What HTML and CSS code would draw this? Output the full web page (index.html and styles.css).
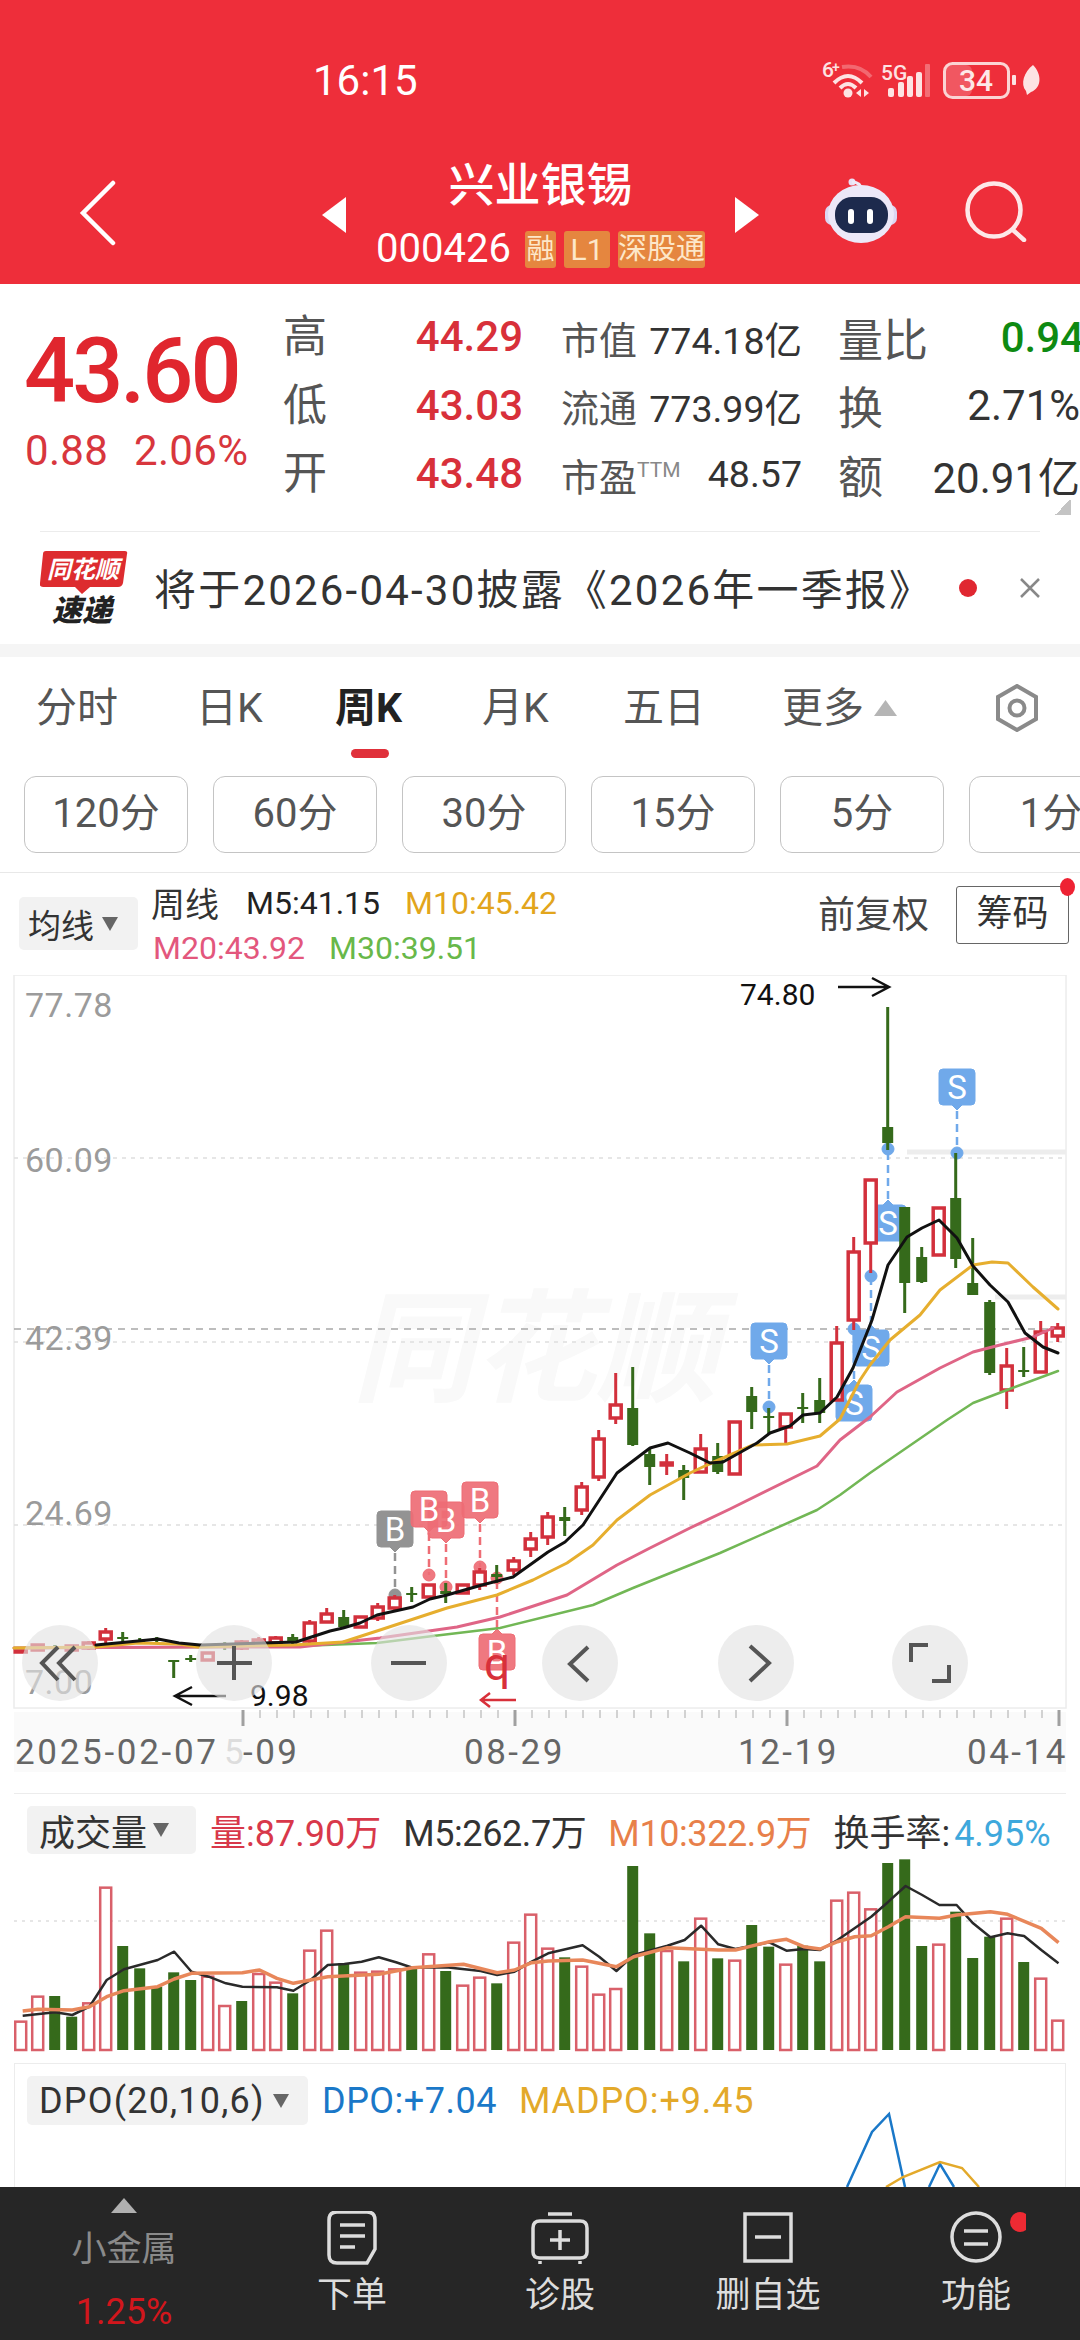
FILE: index.html
```html
<!DOCTYPE html>
<html lang="zh">
<head>
<meta charset="utf-8">
<title>兴业银锡</title>
<link rel="stylesheet" href="styles.css">
</head>
<body>
<div class="page">
  <header class="header">
    <div class="status">
      <span class="time">16:15</span>
      <svg class="status-icons" viewBox="820 55 225 52" width="225" height="52">
        <text class="st-small" x="822" y="77">6</text><text class="st-tiny" x="832" y="72">+</text>
        <path class="st-fade" d="M842 67 Q860 64 871 77"/>
        <path class="st-line" d="M834 83 Q848 69 862 83"/>
        <path class="st-line" d="M840 88 Q848 80 856 88"/>
        <circle class="st-fill" cx="848" cy="93" r="4.5"/>
        <path class="st-fill" d="M861 89v8l-5-4zM864 89v8l5-4z"/>
        <text class="st-small" x="881" y="80">5G</text>
        <rect class="st-fill" x="888" y="88" width="6" height="9" rx="2"/>
        <rect class="st-fill" x="898" y="82" width="6" height="15" rx="2"/>
        <rect class="st-fill" x="907" y="76" width="6" height="21" rx="2"/>
        <rect class="st-fill" x="916" y="72" width="6" height="25" rx="2"/>
        <rect class="st-faint" x="925" y="64" width="5" height="33" rx="1"/>
        <rect class="st-batfill" x="946" y="65" width="26" height="31" rx="6"/>
        <rect class="st-bat" x="944.500" y="63.500" width="64" height="34" rx="8"/>
        <text class="st-num" x="976" y="91">34</text>
        <rect class="st-fill" x="1012" y="75" width="4" height="10" rx="1"/>
        <path class="st-fill" d="M1033 65 C1042 74 1042 88 1031 92 L1027 95 L1026 91 C1020 84 1024 72 1033 65Z"/>
      </svg>
    </div>
    <div class="nav">
      <svg class="back" viewBox="0 0 42 66" width="42" height="66"><path d="M35 3 L5 33 L35 63"/></svg>
      <svg class="tri" viewBox="0 0 24 36" width="24" height="36"><path d="M24 0V36L0 18Z"/></svg>
      <div class="stock">
        <div class="stock-name">兴业银锡</div>
        <div class="stock-code">
          <span class="code">000426</span>
          <span class="tag tag-a">融</span>
          <span class="tag tag-b">L1</span>
          <span class="tag tag-c">深股通</span>
        </div>
      </div>
      <svg class="tri" viewBox="0 0 24 36" width="24" height="36"><path d="M0 0V36L24 18Z"/></svg>
      <div class="nav-right">
        <svg class="robot" viewBox="825 177 72 65" width="72" height="65">
          <circle class="rb-ant" cx="852" cy="181" r="3.500"/>
          <path class="rb-stem" d="M852 181 Q861 181 862 190"/>
          <rect class="rb-ear" x="825" y="204" width="72" height="20" rx="7"/>
          <ellipse class="rb-head" cx="861" cy="213" rx="33" ry="29"/>
          <rect class="rb-visor" x="835" y="196" width="53" height="36" rx="17"/>
          <rect class="rb-eye" x="848" y="208" width="6" height="15" rx="3"/>
          <rect class="rb-eye" x="867" y="208" width="6" height="15" rx="3"/>
        </svg>
        <svg class="search" viewBox="965 181 62 62" width="62" height="62">
          <circle cx="994" cy="211" r="26.500"/>
          <path d="M1013 231 L1024 241"/>
        </svg>
      </div>
    </div>
  </header>

  <section class="quote">
    <div class="price-box">
      <div class="price">43.60</div>
      <div class="change"><span>0.88</span><span>2.06%</span></div>
    </div>
    <div class="q-grid">
      <div class="q-row">
        <span class="q-label">高</span><span class="q-val">44.29</span>
        <div class="q-metric"><span class="m-label">市值</span><span class="m-val">774.18亿</span></div>
        <div class="q-side"><span class="s-label">量比</span><span class="s-val s-green">0.94</span></div>
      </div>
      <div class="q-row">
        <span class="q-label">低</span><span class="q-val">43.03</span>
        <div class="q-metric"><span class="m-label">流通</span><span class="m-val">773.99亿</span></div>
        <div class="q-side"><span class="s-label">换</span><span class="s-val">2.71%</span></div>
      </div>
      <div class="q-row">
        <span class="q-label">开</span><span class="q-val">43.48</span>
        <div class="q-metric"><span class="m-label">市盈<sup class="ttm">TTM</sup></span><span class="m-val">48.57</span></div>
        <div class="q-side"><span class="s-label">额</span><span class="s-val">20.91亿</span></div>
      </div>
    </div>
    <span class="corner"></span>
  </section>

  <section class="notice">
    <svg class="logo" viewBox="40 543 90 90" width="90" height="90">
      <path class="lg-red" d="M46 551 H125 Q128 551 127 554 L123 583 Q122 587 118 587 H90 L82 594 L75 587 H43 Q39 587 40 583 L43 554 Q43 551 46 551Z"/>
      <text class="lg-top" x="83" y="578">同花顺</text>
      <text class="lg-bot" x="82" y="621">速递</text>
    </svg>
    <span class="notice-text">将于2026-04-30披露《2026年一季报》</span>
    <span class="notice-dot"></span>
    <svg class="notice-x" viewBox="0 0 24 24" width="24" height="24"><path d="M3 3 L21 21 M21 3 L3 21"/></svg>
  </section>

  <div class="band"></div>

  <nav class="tabs">
    <span class="tab">分时</span>
    <span class="tab">日K</span>
    <span class="tab tab-on">周K</span>
    <span class="tab">月K</span>
    <span class="tab">五日</span>
    <span class="tab tab-more">更多<svg viewBox="0 0 23 16" width="23" height="16"><path d="M11.500 0L23 16H0Z"/></svg></span>
    <svg class="hex" viewBox="0 0 48 48" width="48" height="48"><path d="M24 2 L43 13 V35 L24 46 L5 35 V13Z"/><circle cx="24" cy="24" r="7.500"/></svg>
  </nav>

  <div class="chips">
    <span class="chip">120分</span>
    <span class="chip">60分</span>
    <span class="chip">30分</span>
    <span class="chip">15分</span>
    <span class="chip">5分</span>
    <span class="chip">1分</span>
  </div>

  <div class="legend">
    <div class="select sel-ma">均线<i class="caret"></i></div>
    <div class="ma-lines">
      <div class="ma-row"><span class="ma-title">周线</span><span class="c-black">M5:41.15</span><span class="c-gold">M10:45.42</span></div>
      <div class="ma-row ma-row2"><span class="c-pink">M20:43.92</span><span class="c-green">M30:39.51</span></div>
    </div>
    <span class="adjust">前复权</span>
    <span class="chouma">筹码<i class="chouma-dot"></i></span>
  </div>

  <svg id="kline" class="kline" viewBox="0 975 1080 818" width="1080" height="818"></svg>

  <section class="panel panel-vol">
    <div class="panel-head">
      <div class="select sel-vol">成交量<i class="caret"></i></div>
      <span class="c-red">量:87.90万</span>
      <span class="c-dark tight">M5:262.7万</span>
      <span class="c-orange tight">M10:322.9万</span>
      <span class="turnover"><span class="c-dark">换手率:</span><span class="c-sky">4.95%</span></span>
    </div>
    <svg id="vol" class="vol" viewBox="14 1854 1052 209" width="1052" height="209"></svg>
  </section>

  <section class="panel panel-dpo">
    <div class="panel-head">
      <div class="select sel-dpo"><span class="dpo-name">DPO(20,10,6)</span><i class="caret"></i></div>
      <span class="c-blue">DPO:+7.04</span>
      <span class="c-gold2">MADPO:+9.45</span>
    </div>
    <svg class="dpo" viewBox="14 2095 1052 92" width="1052" height="92">
      <polyline class="dpo-blue" points="846,2187 871,2132 888,2114 904,2187"/>
      <polyline class="dpo-blue" points="928,2187 939,2164 953,2187"/>
      <polyline class="dpo-gold" points="885,2187 902,2177 939,2162 961,2168 978,2187"/>
    </svg>
  </section>

  <footer class="bottom">
    <div class="b-item b-first">
      <svg class="b-tri" viewBox="0 0 26 15" width="26" height="15"><path d="M13 0L26 15H0Z"/></svg>
      <span class="b-sector">小金属</span>
      <span class="b-pct">1.25%</span>
    </div>
    <div class="b-item">
      <svg class="b-icon" viewBox="-50 0 100 54" width="100" height="54"><path d="M-15 1 H15 Q23 1 23 9 V38 L15 52 H-15 Q-23 52 -23 44 V9 Q-23 1 -15 1Z"/><path d="M-12 14 H13 M-12 25 H13 M-12 36 H3"/></svg>
      <span class="b-label">下单</span>
    </div>
    <div class="b-item">
      <svg class="b-icon" viewBox="-50 0 100 54" width="100" height="54"><path d="M-12 3 H12"/><path d="M-20 10 H20 Q27 10 27 17 V41 Q27 47 20 47 H-20 Q-27 47 -27 41 V17 Q-27 10 -20 10Z"/><path d="M-20 50 V53 M20 50 V53 M-10 29 H10 M0 19 V39"/></svg>
      <span class="b-label">诊股</span>
    </div>
    <div class="b-item">
      <svg class="b-icon" viewBox="-50 0 100 54" width="100" height="54"><path d="M-23 3 H23 V50 H-23Z"/><path d="M-13 26 H13"/></svg>
      <span class="b-label">删自选</span>
    </div>
    <div class="b-item">
      <svg class="b-icon" viewBox="-50 0 100 54" width="100" height="54"><circle cx="0" cy="26" r="24"/><path d="M-12 20 H12 M-12 33 H12"/><ellipse class="b-dot" cx="44" cy="11" rx="10" ry="10"/></svg>
      <span class="b-label">功能</span>
    </div>
  </footer>
</div>
<script src="chart.js"></script>
</body>
</html>
```
FILE: styles.css
```css
* { box-sizing: border-box; }
html, body { margin: 0; padding: 0; background: #fff; }
body { width: 1080px; height: 2340px; overflow: hidden; font-family: Roboto, "Noto Sans CJK SC", sans-serif; color: #333; }
.page { width: 1080px; height: 2340px; overflow: hidden; display: flex; flex-direction: column; }
svg { display: block; flex: none; }
i { font-style: normal; }

/* header */
.header { height: 284px; flex: none; background: #ee2e3a; color: #fff; padding-top: 55px; }
.status { height: 52px; display: flex; align-items: center; justify-content: space-between; padding: 0 35px 0 313px; }
.time { font-size: 42px; line-height: 52px; color: #fff; }
.st-small { font: 500 21px Roboto, sans-serif; fill: #fde3e3; }
.st-tiny { font: 500 14px Roboto, sans-serif; fill: #fde3e3; }
.st-line { fill: none; stroke: #fde3e3; stroke-width: 4; }
.st-fade { fill: none; stroke: #fff; stroke-opacity: .28; stroke-width: 4; }
.st-fill { fill: #fde3e3; }
.st-faint { fill: #fff; fill-opacity: .3; }
.st-bat { fill: none; stroke: #fbd4d4; stroke-width: 3; }
.st-batfill { fill: #fff; fill-opacity: .2; }
.st-num { font: 500 30px Roboto, sans-serif; fill: #fde8e8; text-anchor: middle; }

.nav { margin-top: 51px; height: 110px; display: flex; align-items: center; padding-left: 78px; }
.back { margin-right: 202px; }
.back path { fill: none; stroke: #fff; stroke-width: 4.500; stroke-linecap: round; }
.tri { margin-top: 4px; }
.tri path { fill: #fff; }
.stock { width: 389px; display: flex; flex-direction: column; align-items: center; }
.stock-name { font-size: 46px; line-height: 54px; color: #fff; font-weight: 500; }
.stock-code { margin-top: 18px; height: 38px; display: flex; align-items: center; }
.code { font-size: 40px; line-height: 38px; width: 149px; color: #fff; }
.tag { height: 37px; line-height: 37px; background: #e5863f; color: #fde7c9; font-size: 30px; text-align: center; border-radius: 3px; }
.tag-a { width: 31px; margin-right: 8px; font-size: 28px; overflow: hidden; }
.tag-b { width: 46px; margin-right: 8px; }
.tag-c { width: 87px; font-size: 29px; white-space: nowrap; overflow: hidden; }
.nav-right { display: flex; align-items: center; padding-left: 66px; }
.robot { margin-right: 68px; margin-top: -6px; }
.rb-ant { fill: #e8e0f5; }
.rb-stem { fill: none; stroke: #efe9f8; stroke-width: 3; }
.rb-ear { fill: #dcd6f2; }
.rb-head { fill: #ece8f8; }
.rb-visor { fill: #1d2a4d; }
.rb-eye { fill: #fff; }
.search { margin-top: -4px; }
.search circle, .search path { fill: none; stroke: #fde8e8; stroke-width: 4.500; stroke-linecap: round; }

/* quote */
.quote { height: 247px; flex: none; position: relative; display: flex; padding: 19px 0 0 25px; }
.price-box { width: 258px; padding-top: 24px; }
.price { font-size: 90px; line-height: 90px; color: #e0262e; font-weight: 500; letter-spacing: -3px; margin-left: -1px; }
.change { margin-top: 12px; display: flex; gap: 26px; font-size: 42px; line-height: 44px; color: #d8363d; letter-spacing: .3px; white-space: nowrap; }
.q-grid { flex: 1; display: flex; flex-direction: column; }
.q-row { height: 68.500px; display: grid; grid-template-columns: 60px 179px 240px 240px; column-gap: 0; align-items: center; }
.q-label { font-size: 44px; line-height: 50px; color: #555; }
.q-val { font-size: 42px; line-height: 50px; color: #d8303a; font-weight: 500; text-align: right; margin-right: -1px; }
.q-metric { margin-left: 39px; width: 241px; display: flex; justify-content: space-between; align-items: center; }
.m-label { font-size: 38px; color: #555; white-space: nowrap; }
.ttm { font-size: 21px; color: #888; vertical-align: 14px; line-height: 0; }
.m-val { font-size: 37.500px; color: #333; }
.q-side { margin-left: 76px; width: 242px; display: flex; justify-content: space-between; align-items: center; }
.s-label { font-size: 45px; color: #555; }
.s-val { font-size: 42px; color: #333; white-space: nowrap; }
.s-green { color: #0e8a12; font-weight: 500; margin-right: -4px; }
.corner { position: absolute; left: 1054px; top: 216px; width: 17px; height: 15px; background: linear-gradient(135deg, transparent 50%, #c4c4c4 50%); }

/* notice */
.notice { height: 113px; flex: none; margin: 0 40px; border-top: 1px solid #ececec; display: flex; align-items: center; position: relative; }
.logo { margin-right: 24px; }
.lg-red { fill: #dd2c2f; }
.lg-top { font: italic 700 24px "Noto Sans CJK SC", sans-serif; fill: #fff; text-anchor: middle; }
.lg-bot { font: italic 900 30px "Noto Sans CJK SC", sans-serif; fill: #222; text-anchor: middle; }
.notice-text { font-size: 42px; letter-spacing: 2.200px; color: #333; white-space: nowrap; margin-top: -3px; }
.notice-dot { width: 18px; height: 18px; border-radius: 50%; background: #e02731; margin-left: 26px; flex: none; }
.notice-x { margin-left: 41px; flex: none; }
.notice-x path { fill: none; stroke: #888; stroke-width: 2.500; }
.band { height: 13px; flex: none; background: #f5f5f5; }

/* tabs */
.tabs { height: 115px; flex: none; display: grid; grid-template-columns: 160px 139px 147px 141px 159px 211px 1fr; align-items: center; padding: 0 0 13px 36px; }
.tab { font-size: 41px; line-height: 48px; color: #555; position: relative; white-space: nowrap; }
.tab-on { color: #222; font-weight: 700; }
.tab-on::after { content: ""; position: absolute; left: 16px; top: 65px; width: 38px; height: 9px; border-radius: 5px; background: #e0303a; }
.tab-more { display: flex; align-items: center; gap: 10px; }
.tab-more path { fill: #b5b5b5; }
.hex path, .hex circle { fill: none; stroke: #8a8a8a; stroke-width: 4; }
.chips { height: 77px; flex: none; margin-top: 4px; padding-left: 24px; display: flex; gap: 26px; overflow: hidden; }
.chip { width: 164px; flex: none; margin-right: -1px; border: 1.500px solid #c4c4c4; border-radius: 12px; text-align: center; font-size: 40px; line-height: 74px; color: #555; }

/* legend */
.legend { height: 103px; flex: none; margin-top: 19px; border-top: 1px solid #e8e8e8; display: flex; align-items: flex-start; padding-left: 19px; }
.select { background: #f2f2f2; border-radius: 5px; display: flex; align-items: center; flex: none; }
.caret { width: 0; height: 0; border-left: 8px solid transparent; border-right: 8px solid transparent; border-top: 14px solid #666; }
.sel-ma { width: 119px; height: 53px; margin-top: 24px; padding-left: 9px; font-size: 33px; gap: 8px; }
.ma-lines { margin: 7px 0 0 13px; }
.ma-row { height: 45px; display: flex; align-items: center; gap: 25px; font-size: 32px; white-space: nowrap; }
.ma-row2 { padding-left: 2px; gap: 24px; }
.ma-title { font-size: 34px; color: #333; margin-right: 2px; }
.c-black { color: #222; }
.c-gold { color: #e2a51c; }
.c-pink { color: #e3577d; }
.c-green { color: #68b84a; }
.adjust { margin-left: auto; font-size: 37px; line-height: 46px; margin-top: 20px; color: #444; }
.chouma { position: relative; margin: 13px 11px 0 27px; width: 113px; height: 58px; border: 1.500px solid #666; border-radius: 3px; text-align: center; font-size: 36px; line-height: 54px; color: #333; }
.chouma-dot { position: absolute; right: -7px; top: -9px; width: 15px; height: 18px; border-radius: 50%; background: #ee2233; }

/* chart */
.kline { margin: 0; }
.frame { fill: #fff; stroke: #ececec; stroke-width: 1.500; }
.wm { font: italic 700 122px "Noto Sans CJK SC", sans-serif; fill: #f9f9f9; }
.dot-line { stroke: #dedede; stroke-width: 1.500; stroke-dasharray: 4 5; }
.now-line { stroke: #a8a8a8; stroke-width: 1.500; stroke-dasharray: 7 6; }
.shade-line { stroke: #ededed; stroke-width: 5; }
.axis-y { font: 400 34px Roboto, sans-serif; fill: #9b9b9b; letter-spacing: .5px; }
.axis-bg { fill: #fafafa; }
.tick { stroke: #c4c4c4; stroke-width: 1.500; }
.tick-major { stroke: #a0a0a0; stroke-width: 3; }
.date { font: 400 35px Roboto, sans-serif; fill: #666; letter-spacing: 2.500px; }
.date-long { letter-spacing: 2.700px; }
.date-faint { fill: #ddd; }
.mark-box { stroke: none; }
.mark-dash { fill: none; stroke-width: 2.500; stroke-dasharray: 8 5; }
.mark-txt { font: 400 33px Roboto, sans-serif; fill: #fff; text-anchor: middle; }
.m-gray { fill: #939393; stroke: #939393; }
.m-red { fill: #ee6d75; stroke: #ee6d75; fill-opacity: .92; }
.m-blue { fill: #70a9ea; stroke: #70a9ea; }
.c-wick-r { stroke: #d2303c; stroke-width: 3; }
.c-wick-g { stroke: #356a1b; stroke-width: 3; }
.c-body-r { fill: #fff; stroke: #d2303c; stroke-width: 3.500; }
.c-body-g { fill: #356a1b; }
.ma { fill: none; stroke-linejoin: round; stroke-linecap: round; }
.ma5 { stroke: #111; stroke-width: 3; }
.ma10 { stroke: #e6ae2e; stroke-width: 3; }
.ma20 { stroke: #df6586; stroke-width: 3; }
.ma30 { stroke: #72b755; stroke-width: 2.500; }
.hl { font: 400 30px Roboto, sans-serif; fill: #111; }
.hl-arrow { fill: none; stroke: #111; stroke-width: 2.500; }
.low-q { font: 400 46px Roboto, sans-serif; fill: #d8303a; text-anchor: middle; }
.low-arrow { fill: none; stroke: #d8303a; stroke-width: 2.500; }
.ctl { fill: #e2e2e2; fill-opacity: .62; }
.ctl-i { fill: none; stroke: #555; stroke-width: 4; }

/* sub panels */
.panel { flex: none; margin: 0 14px; border: 0 solid #ececec; border-width: 1.500px 1.500px 0 1.500px; overflow: hidden; }
.panel-vol { height: 270px; border-width: 1.500px 0 0 0; }
.panel-dpo { height: 124px; }
.panel-head { margin: 12px 0 0 13px; height: 48px; display: flex; align-items: center; gap: 22px; font-size: 36px; white-space: nowrap; }
.panel-dpo .panel-head { height: 49px; margin-left: 12px; }
.sel-vol { width: 169px; height: 48px; padding-left: 12px; gap: 6px; font-size: 36px; color: #333; margin-right: -8px; }
.sel-dpo { width: 281px; height: 49px; padding-left: 12px; gap: 8px; font-size: 36px; color: #333; margin-right: -8px; }
.dpo-name { letter-spacing: 1.200px; }
.tight { letter-spacing: -.4px; }
.turnover { display: block; }
.c-red { color: #d8384a; }
.c-dark { color: #333; }
.c-orange { color: #e8804a; }
.c-sky { color: #3ea8dc; margin-left: 4px; }
.c-blue { color: #1a78c8; letter-spacing: .5px; }
.c-gold2 { color: #e3a92a; letter-spacing: .9px; }
.v-r { fill: #fff; stroke: #d9606a; stroke-width: 2.500; }
.v-g { fill: #356a1b; }
.v-dot { stroke: #dedede; stroke-width: 1.500; stroke-dasharray: 3 5; }
.v5 { fill: none; stroke: #2a2a2a; stroke-width: 2.500; stroke-linejoin: round; }
.v10 { fill: none; stroke: #e8875a; stroke-width: 3.500; stroke-linejoin: round; }
.dpo { margin-top: -30px; }
.dpo-blue { fill: none; stroke: #1a78c8; stroke-width: 2.500; }
.dpo-gold { fill: none; stroke: #e3a92a; stroke-width: 2.500; }

/* bottom bar */
.bottom { height: 153px; flex: none; background: #262626; display: grid; grid-template-columns: 248px repeat(4, 208px); }
.b-item { display: flex; flex-direction: column; align-items: center; padding-top: 24px; }
.b-first { padding-top: 11px; }
.b-tri path { fill: #b0b0b0; }
.b-sector { margin-top: 17px; font-size: 35px; line-height: 40px; color: #8a8a8a; }
.b-pct { margin-top: 22px; font-size: 36px; line-height: 40px; color: #d2161c; }
.b-icon path, .b-icon circle { fill: none; stroke: #ddd; stroke-width: 3.500; }
.b-icon .b-dot { fill: #ee2a33; stroke: none; }
.b-label { margin-top: 11px; font-size: 35px; line-height: 40px; color: #ddd; }
```
FILE: chart.js
```js
var NS = 'http://www.w3.org/2000/svg';
function el(parent, tag, attrs, text) {
  var n = document.createElementNS(NS, tag);
  for (var k in attrs) n.setAttribute(k, attrs[k]);
  if (text !== undefined) n.textContent = text;
  parent.appendChild(n);
  return n;
}
function xOf(i) { return 20.7 + 17 * i; }

var k = document.getElementById('kline');

/* frame and grid */
el(k, 'rect', {x: 14, y: 975, width: 1052, height: 733, class: 'frame'});
el(k, 'text', {x: 352, y: 1392, class: 'wm'}, '同花顺');
[1158, 1342, 1525].forEach(function (y) { el(k, 'line', {x1: 14, x2: 1066, y1: y, y2: y, class: 'dot-line'}); });
el(k, 'line', {x1: 14, x2: 1066, y1: 1329, y2: 1329, class: 'now-line'});
el(k, 'line', {x1: 907, x2: 1066, y1: 1152, y2: 1152, class: 'shade-line'});
el(k, 'line', {x1: 995, x2: 1066, y1: 1297, y2: 1297, class: 'shade-line'});
[['77.78', 1017], ['60.09', 1172], ['42.39', 1350], ['24.69', 1525], ['7.00', 1694]].forEach(function (a) {
  el(k, 'text', {x: 25, y: a[1], class: 'axis-y'}, a[0]);
});

/* x axis */
el(k, 'rect', {x: 14, y: 1712, width: 1052, height: 60, class: 'axis-bg'});
for (var t = 243; t <= 1066; t += 17) {
  var major = (t - 243) % 272 === 0;
  el(k, 'line', {x1: t, x2: t, y1: 1710, y2: major ? 1726 : 1718, class: major ? 'tick tick-major' : 'tick'});
}
el(k, 'text', {x: 15, y: 1764, class: 'date date-long'}, '2025-02-07');
el(k, 'text', {x: 224, y: 1764, class: 'date date-faint'}, '5');
el(k, 'text', {x: 243, y: 1764, class: 'date'}, '-09');
el(k, 'text', {x: 464, y: 1764, class: 'date'}, '08-29');
el(k, 'text', {x: 738, y: 1764, class: 'date'}, '12-19');
el(k, 'text', {x: 967, y: 1764, class: 'date'}, '04-14');

/* trade markers */
function marker(cx, top, ch, col, dir, dotY) {
  var l = cx - 18, r = cx + 18, b = top + 36, d;
  if (dir === 'd') {
    d = 'M' + (l + 4) + ' ' + top + 'H' + (r - 4) + 'Q' + r + ' ' + top + ' ' + r + ' ' + (top + 4) + 'V' + (b - 4) + 'Q' + r + ' ' + b + ' ' + (r - 4) + ' ' + b + 'H' + (cx + 5) + 'L' + cx + ' ' + (b + 5) + 'L' + (cx - 5) + ' ' + b + 'H' + (l + 4) + 'Q' + l + ' ' + b + ' ' + l + ' ' + (b - 4) + 'V' + (top + 4) + 'Q' + l + ' ' + top + ' ' + (l + 4) + ' ' + top + 'Z';
    el(k, 'line', {x1: cx, x2: cx, y1: b + 6, y2: dotY, class: 'mark-dash ' + col});
  } else {
    d = 'M' + (l + 4) + ' ' + top + 'H' + (cx - 5) + 'L' + cx + ' ' + (top - 5) + 'L' + (cx + 5) + ' ' + top + 'H' + (r - 4) + 'Q' + r + ' ' + top + ' ' + r + ' ' + (top + 4) + 'V' + (b - 4) + 'Q' + r + ' ' + b + ' ' + (r - 4) + ' ' + b + 'H' + (l + 4) + 'Q' + l + ' ' + b + ' ' + l + ' ' + (b - 4) + 'V' + (top + 4) + 'Q' + l + ' ' + top + ' ' + (l + 4) + ' ' + top + 'Z';
    el(k, 'line', {x1: cx, x2: cx, y1: top - 6, y2: dotY, class: 'mark-dash ' + col});
  }
  el(k, 'circle', {cx: cx, cy: dotY, r: 6, class: col + ' mark-box'});
  el(k, 'path', {d: d, class: 'mark-box ' + col});
  el(k, 'text', {x: cx, y: top + 30, class: 'mark-txt'}, ch);
}
marker(446, 1502, 'B', 'm-red', 'd', 1587);
marker(395, 1511, 'B', 'm-gray', 'd', 1595);
marker(429, 1491, 'B', 'm-red', 'd', 1575);
marker(480, 1482, 'B', 'm-red', 'd', 1567);
marker(497, 1634, 'B', 'm-red', 'u', 1578);
marker(769, 1323, 'S', 'm-blue', 'd', 1407);
marker(871, 1330, 'S', 'm-blue', 'u', 1276);
marker(854, 1385, 'S', 'm-blue', 'u', 1329);
marker(888, 1205, 'S', 'm-blue', 'u', 1149);
marker(957, 1069, 'S', 'm-blue', 'd', 1153);

/* candles: [index, colour, high, body top, body bottom, low] */
var candles = [
  [0,'r',1648,1649,1652,1653],[1,'r',1644,1645,1650,1651],[2,'g',1645,1647,1649,1651],[3,'r',1645,1646,1650,1651],
  [4,'r',1641,1643,1648,1650],[5,'r',1628,1632,1639,1647],[6,'g',1632,1637,1639,1643],[7,'g',1638,1641,1643,1644],
  [8,'g',1637,1639,1641,1643],[9,'g',1660,1660,1662,1678],[10,'g',1655,1658,1660,1662],[11,'r',1652,1653,1660,1661],
  [12,'g',1642,1645,1647,1650],[13,'r',1640,1642,1648,1650],[14,'r',1637,1640,1646,1648],[15,'r',1636,1638,1643,1644],
  [16,'g',1634,1637,1643,1644],[17,'r',1620,1623,1641,1644],[18,'r',1608,1614,1622,1622],[19,'g',1610,1617,1627,1628],
  [20,'r',1616,1617,1627,1627],[21,'r',1603,1607,1618,1621],[22,'r',1595,1598,1608,1610],[23,'g',1587,1593,1595,1602],
  [24,'r',1584,1585,1597,1598],[25,'g',1583,1591,1594,1603],[26,'r',1584,1585,1593,1594],[27,'r',1568,1572,1585,1590],
  [28,'g',1565,1574,1577,1583],[29,'r',1557,1561,1570,1575],[30,'r',1532,1539,1549,1557],[31,'r',1512,1517,1537,1545],
  [32,'g',1507,1517,1521,1536],[33,'r',1482,1487,1510,1515],[34,'r',1430,1439,1477,1481],[35,'r',1373,1405,1418,1424],
  [36,'g',1367,1408,1445,1446],[37,'g',1448,1454,1467,1485],[38,'r',1454,1463,1465,1475],[39,'g',1465,1470,1478,1500],
  [40,'r',1434,1449,1472,1473],[41,'g',1443,1456,1472,1474],[42,'r',1422,1422,1474,1474],[43,'g',1387,1396,1412,1429],
  [44,'g',1408,1416,1418,1435],[45,'r',1413,1414,1427,1443],[46,'g',1393,1407,1409,1423],[47,'g',1378,1400,1413,1423],
  [48,'r',1326,1343,1400,1400],[49,'r',1237,1252,1320,1330],[50,'r',1180,1180,1243,1273],[51,'g',1007,1127,1143,1150],
  [52,'g',1207,1207,1283,1313],[53,'g',1247,1257,1282,1283],[54,'r',1208,1208,1255,1256],[55,'g',1153,1198,1259,1268],
  [56,'g',1238,1283,1295,1295],[57,'g',1300,1302,1373,1375],[58,'r',1348,1366,1390,1409],[59,'g',1347,1370,1372,1377],
  [60,'r',1321,1332,1372,1373],[61,'r',1323,1328,1336,1342]
];
candles.forEach(function (c) {
  var x = xOf(c[0]), g = c[1] === 'g';
  el(k, 'line', {x1: x, x2: x, y1: c[2], y2: c[5], class: g ? 'c-wick-g' : 'c-wick-r'});
  el(k, 'rect', {x: x - 5.5, width: 11, y: c[3], height: c[4] - c[3], class: g ? 'c-body-g' : 'c-body-r'});
});

/* moving averages */
function line(cls, pts) {
  el(k, 'polyline', {class: 'ma ' + cls, points: pts.map(function (p) { return p.join(','); }).join(' ')});
}
line('ma30', [[14,1648],[200,1647],[300,1646],[377,1643],[433,1636],[500,1628],[593,1605],[633,1588],[720,1553],[817,1510],[840,1495],[870,1473],[947,1420],[973,1403],[1007,1390],[1058,1371]]);
line('ma20', [[14,1648],[200,1647],[300,1647],[380,1638],[457,1627],[500,1617],[567,1595],[617,1565],[650,1548],[690,1528],[730,1509],[817,1466],[840,1440],[870,1417],[897,1392],[940,1368],[973,1352],[1000,1345],[1033,1337],[1053,1328]]);
line('ma10', [[14,1648],[96,1647],[138,1643],[179,1644],[198,1647],[293,1645],[343,1642],[380,1630],[447,1608],[497,1595],[533,1580],[567,1563],[593,1545],[617,1520],[650,1495],[690,1473],[707,1465],[753,1445],[787,1444],[820,1436],[840,1419],[860,1380],[870,1365],[890,1340],[920,1315],[940,1290],[973,1265],[992,1262],[1008,1263],[1033,1287],[1058,1309]]);
line('ma5', [[96,1645],[138,1641],[158,1639],[179,1643],[200,1645],[296,1642],[330,1631],[343,1628],[360,1623],[377,1615],[413,1607],[430,1599],[447,1595],[482,1585],[513,1577],[548,1552],[565,1542],[583,1525],[617,1473],[650,1448],[668,1443],[690,1453],[710,1463],[723,1462],[757,1443],[770,1433],[790,1426],[803,1415],[820,1413],[837,1397],[853,1368],[872,1320],[888,1265],[907,1237],[922,1228],[939,1220],[957,1238],[973,1266],[990,1285],[1008,1302],[1025,1333],[1043,1347],[1058,1353]]);

/* high and low labels */
el(k, 'text', {x: 740, y: 1005, class: 'hl'}, '74.80');
el(k, 'path', {d: 'M838 987H888M872 978L889 987L872 996', class: 'hl-arrow'});
el(k, 'text', {x: 250, y: 1706, class: 'hl'}, '9.98');
el(k, 'path', {d: 'M226 1696H176M192 1687L175 1696L192 1705', class: 'hl-arrow'});
el(k, 'text', {x: 497, y: 1680, class: 'low-q'}, 'q');
el(k, 'path', {d: 'M516 1700H482M490 1693L481 1700L490 1707', class: 'low-arrow'});

/* chart controls */
[60, 234, 409, 580, 756, 930].forEach(function (x) { el(k, 'circle', {cx: x, cy: 1663, r: 38, class: 'ctl'}); });
el(k, 'path', {d: 'M58 1647L42 1663L58 1680M75 1647L59 1663L75 1680', class: 'ctl-i'});
el(k, 'path', {d: 'M217 1663H252M234 1646V1680', class: 'ctl-i'});
el(k, 'path', {d: 'M391 1663H426', class: 'ctl-i'});
el(k, 'path', {d: 'M588 1647L570 1664L588 1681', class: 'ctl-i'});
el(k, 'path', {d: 'M750 1646L769 1663L750 1681', class: 'ctl-i'});
el(k, 'path', {d: 'M911 1662V1645H928M932 1681H949V1665', class: 'ctl-i'});

/* volume panel */
var v = document.getElementById('vol');
var tops = [725,650,648,710,670,323,498,565,620,577,600,590,678,663,582,608,640,512,452,550,578,575,568,565,523,573,617,593,610,488,404,506,532,560,644,627,258,460,513,544,416,535,542,435,500,554,497,544,362,338,388,249,238,498,494,395,534,470,416,546,596,722];
var greens = {2:1,3:1,6:1,7:1,8:1,9:1,10:1,13:1,16:1,19:1,23:1,25:1,28:1,32:1,36:1,37:1,39:1,41:1,43:1,44:1,46:1,47:1,51:1,52:1,53:1,55:1,56:1,57:1,59:1};
el(v, 'line', {x1: 14, x2: 1066, y1: 1921, y2: 1921, class: 'v-dot'});
tops.forEach(function (Y, i) {
  var top = 1780 + Y / 3, g = greens[i];
  el(v, 'rect', {x: xOf(i) - 5.5, width: 11, y: top, height: 2050 - top, class: g ? 'v-g' : 'v-r'});
});
function vline(cls, pts) {
  var s = '';
  for (var i = 0; i < pts.length; i += 2) s += (pts[i] / 1.452).toFixed(1) + ',' + (1780 + pts[i + 1] / 3).toFixed(1) + ' ';
  el(v, 'polyline', {class: cls, points: s});
}
vline('v5', [33,707,80,697,105,705,130,680,155,600,180,568,229,540,253,515,278,575,303,590,328,610,352,620,402,622,426,632,451,600,476,555,500,552,525,545,550,532,575,547,599,563,648,562,698,573,722,585,747,575,772,545,796,520,846,496,870,530,895,573,920,525,969,497,994,480,1018,437,1043,493,1068,507,1117,487,1142,512,1167,507,1191,510,1216,480,1265,410,1290,365,1315,318,1339,345,1364,375,1389,375,1413,430,1438,472,1463,460,1487,468,1512,510,1537,550]);
vline('v10', [33,693,55,688,105,690,130,680,155,650,180,632,229,620,253,597,278,580,352,578,377,570,402,595,426,610,476,590,550,583,599,563,673,553,722,578,747,570,772,548,796,543,846,540,895,560,920,530,969,503,1043,510,1068,510,1117,485,1142,478,1167,500,1191,507,1216,485,1241,470,1265,467,1290,440,1315,410,1364,415,1389,405,1438,395,1463,403,1512,445,1537,488]);
```
